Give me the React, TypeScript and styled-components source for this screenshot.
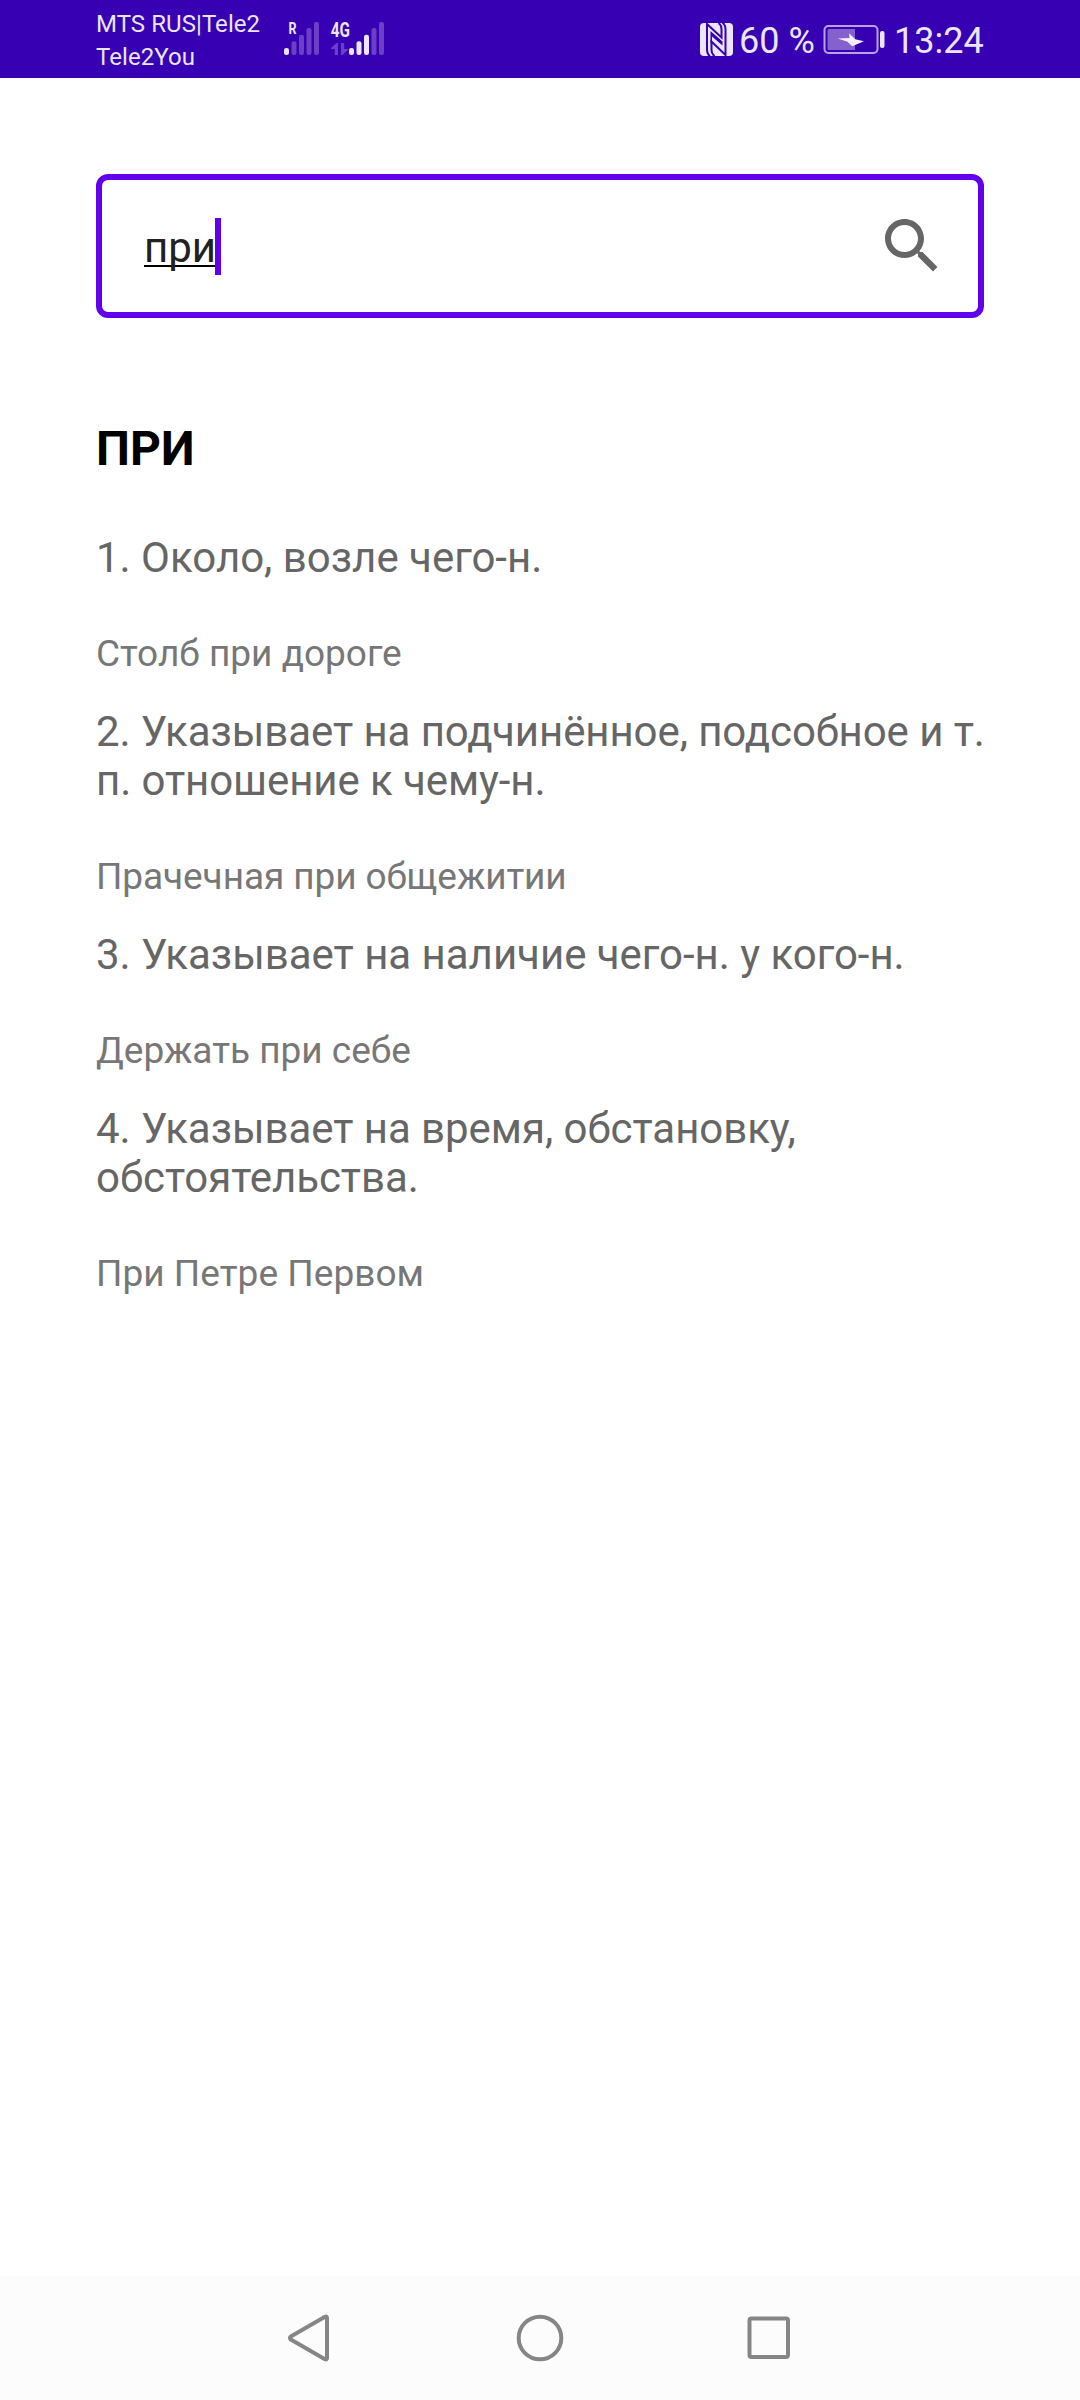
import React from 'react';
import styled, { createGlobalStyle } from 'styled-components';

const GlobalStyle = createGlobalStyle`
  * { box-sizing: border-box; }
  body { margin: 0; background: #fff; font-family: Roboto, 'Noto Sans', sans-serif; }
`;

const STATUS = '#ebe5f7';
const DIM = '#6c40c6';

const Screen = styled.div`
  display: flex;
  flex-direction: column;
  width: 1080px;
  height: 2400px;
  background: #fff;
`;

const StatusBar = styled.header`
  display: flex;
  justify-content: space-between;
  height: 78px;
  padding: 0 93px 0 96px;
  background: #3700b3;
  color: ${STATUS};
`;

const StatusGroup = styled.div`
  display: flex;
  align-items: flex-start;
`;

const Carriers = styled.div`
  width: 188px;
  padding-top: 8px;
  font-size: 24px;
  line-height: 33px;
  letter-spacing: 0.06px;
  white-space: nowrap;
`;

const Signals = styled.svg`
  display: block;
  width: 104px;
  height: 78px;
`;

const NfcIcon = styled.svg`
  display: block;
  width: 33px;
  height: 33px;
  margin: 23px 6px 0 0;
`;

const BatteryIcon = styled.svg`
  display: block;
  width: 62px;
  height: 30px;
  margin: 25px 9px 0 0;
`;

const StatusText = styled.span<{ $width: number }>`
  width: ${(p) => p.$width}px;
  padding-top: 20px;
  font-size: 36px;
  line-height: 42px;
  white-space: nowrap;
`;

const Content = styled.main`
  flex: 1;
  padding: 96px 96px 0;
`;

const SearchField = styled.div`
  display: flex;
  align-items: center;
  justify-content: space-between;
  height: 144px;
  padding: 0 30px 0 42px;
  border: 6px solid #6200ee;
  border-radius: 12px;
`;

const Query = styled.div`
  display: flex;
  align-items: flex-end;
  height: 57px;
`;

const QueryText = styled.span`
  width: 71px;
  height: 52px;
  color: #212121;
  font-size: 42px;
  line-height: 49px;
  white-space: nowrap;
  text-decoration: underline #000 2px;
  text-decoration-skip-ink: none;
  text-underline-offset: 3px;
`;

const Caret = styled.span`
  width: 6px;
  height: 57px;
  background: #6200ee;
`;

const SearchIcon = styled.svg`
  display: block;
  width: 72px;
  height: 72px;
  fill: #666;
`;

const Headword = styled.h1`
  margin: 102px 0 56px;
  color: #000;
  font-size: 48px;
  font-weight: 700;
  line-height: 57px;
`;

const Meanings = styled.div`
  display: flex;
  flex-direction: column;
  gap: 31px;
`;

const Meaning = styled.section`
  display: flex;
  flex-direction: column;
  gap: 49px;
`;

const Definition = styled.p<{ $tracking?: number }>`
  margin: 0;
  color: #666;
  font-size: 42px;
  line-height: 49px;
  letter-spacing: ${(p) => p.$tracking ?? 0}px;
  white-space: pre;
`;

const Example = styled.p<{ $tracking?: number }>`
  margin: 0;
  color: #777;
  font-size: 37px;
  line-height: 45px;
  letter-spacing: ${(p) => p.$tracking ?? 0}px;
  white-space: nowrap;
`;

const NavBar = styled.nav`
  display: flex;
  align-items: center;
  justify-content: center;
  gap: 180px;
  height: 124px;
  background: #fcfcfc;
`;

const NavIcon = styled.svg`
  display: block;
  width: 50px;
  height: 50px;
  fill: none;
  stroke: #868686;
  stroke-width: 4;
  stroke-linejoin: round;
`;

type Entry = {
  text: string;
  example: string;
  tracking?: number;
  exampleTracking?: number;
};

const entries: Entry[] = [
  { text: '1. Около, возле чего-н.', example: 'Столб при дороге' },
  {
    text: '2. Указывает на подчинённое, подсобное и т.\nп. отношение к чему-н.',
    example: 'Прачечная при общежитии',
    tracking: -0.08,
    exampleTracking: -0.09,
  },
  { text: '3. Указывает на наличие чего-н. у кого-н.', example: 'Держать при себе', tracking: -0.02 },
  {
    text: '4. Указывает на время, обстановку,\nобстоятельства.',
    example: 'При Петре Первом',
    tracking: -0.05,
    exampleTracking: 0.04,
  },
];

const barTops = [48, 41.3, 34.7, 28, 22];

function SignalBars({ x, level }: { x: number; level: number }) {
  return (
    <>
      {barTops.map((top, i) => (
        <rect
          key={top}
          x={x + i * 7.5}
          y={top}
          width={5}
          height={55 - top}
          rx={2.2}
          fill={i < level ? STATUS : DIM}
        />
      ))}
    </>
  );
}

export default function App() {
  return (
    <Screen>
      <GlobalStyle />
      <StatusBar>
        <StatusGroup>
          <Carriers>
            <div>MTS RUS|Tele2</div>
            <div>Tele2You</div>
          </Carriers>
          <Signals viewBox="284 0 104 78">
            <SignalBars x={284} level={1} />
            <SignalBars x={349} level={3} />
            <text x="288.6" y="34" fontSize="16" fontWeight="700" fill={STATUS} textLength="8" lengthAdjust="spacingAndGlyphs">R</text>
            <text x="330.8" y="37" fontSize="20.5" fontWeight="700" fill={STATUS} textLength="19.2" lengthAdjust="spacingAndGlyphs">4G</text>
            <path fill={DIM} d="M338 43v12h-3.2v-6H331v-1l5.5-5zM341 43h3.2v6h3.6v1l-5.3 5H341z" />
          </Signals>
        </StatusGroup>
        <StatusGroup>
          <NfcIcon viewBox="0 0 33 33">
            <rect width="33" height="33" rx="4" fill={STATUS} />
            <g fill="none" stroke="#3700b3" strokeWidth="2">
              <path d="M10 33.5Q7 31 7 27V1L21.5 14.500V6Q21.5 2 18.5 0" />
              <path d="M22.5-.5Q25.500 2 25.500 6V32L11.500 18.500V27Q11.500 31 14.500 33" />
            </g>
            <path fill="#3700b3" d="M10.500 8 22.500 18.500V22.500L12 13.500V20H10.500z" />
          </NfcIcon>
          <StatusText $width={84}>60 %</StatusText>
          <BatteryIcon viewBox="823 25 62 30">
            <rect x="824.5" y="26" width="53" height="27" rx="4" fill="none" stroke="#b9a3e4" strokeWidth="2" />
            <path fill="#8561d0" d="M829 29h26v21h-26a1.5 1.5 0 0 1-1.5-1.5v-18A1.5 1.5 0 0 1 829 29z" />
            <path fill="#f3effb" d="M849 33.3 855.3 39.200 864 41.2 852.200 46.300 847.500 41.800 837.7 38.5 849.500 38z" />
            <rect x="880" y="31" width="4.5" height="17" rx="2" fill={STATUS} />
          </BatteryIcon>
          <StatusText $width={93}>13:24</StatusText>
        </StatusGroup>
      </StatusBar>

      <Content>
        <SearchField>
          <Query>
            <QueryText>при</QueryText>
            <Caret />
          </Query>
          <SearchIcon viewBox="0 0 24 24">
            <path d="M15.5 14h-.79l-.28-.27C15.41 12.59 16 11.11 16 9.5 16 5.91 13.09 3 9.5 3S3 5.91 3 9.5 5.91 16 9.5 16c1.61 0 3.09-.59 4.23-1.57l.27.28v.79l5 4.99L20.49 19l-4.99-5zm-6 0C7.01 14 5 11.99 5 9.5S7.01 5 9.5 5 14 7.01 14 9.5 11.99 14 9.5 14z" />
          </SearchIcon>
        </SearchField>

        <Headword>ПРИ</Headword>

        <Meanings>
          {entries.map((e) => (
            <Meaning key={e.text}>
              <Definition $tracking={e.tracking}>{e.text}</Definition>
              <Example $tracking={e.exampleTracking}>{e.example}</Example>
            </Meaning>
          ))}
        </Meanings>
      </Content>

      <NavBar>
        <NavIcon viewBox="0 0 50 50">
          <path d="M5.8 23.4 40 3.8Q42 3 42 5V45Q42 47 40 46.2L5.8 26.6Q4.3 25 5.8 23.4z" />
        </NavIcon>
        <NavIcon viewBox="0 0 50 50">
          <circle cx="25" cy="25" r="21.3" />
        </NavIcon>
        <NavIcon viewBox="0 0 50 50">
          <rect x="4.5" y="5.5" width="38.5" height="38.5" rx="2" />
        </NavIcon>
      </NavBar>
    </Screen>
  );
}
